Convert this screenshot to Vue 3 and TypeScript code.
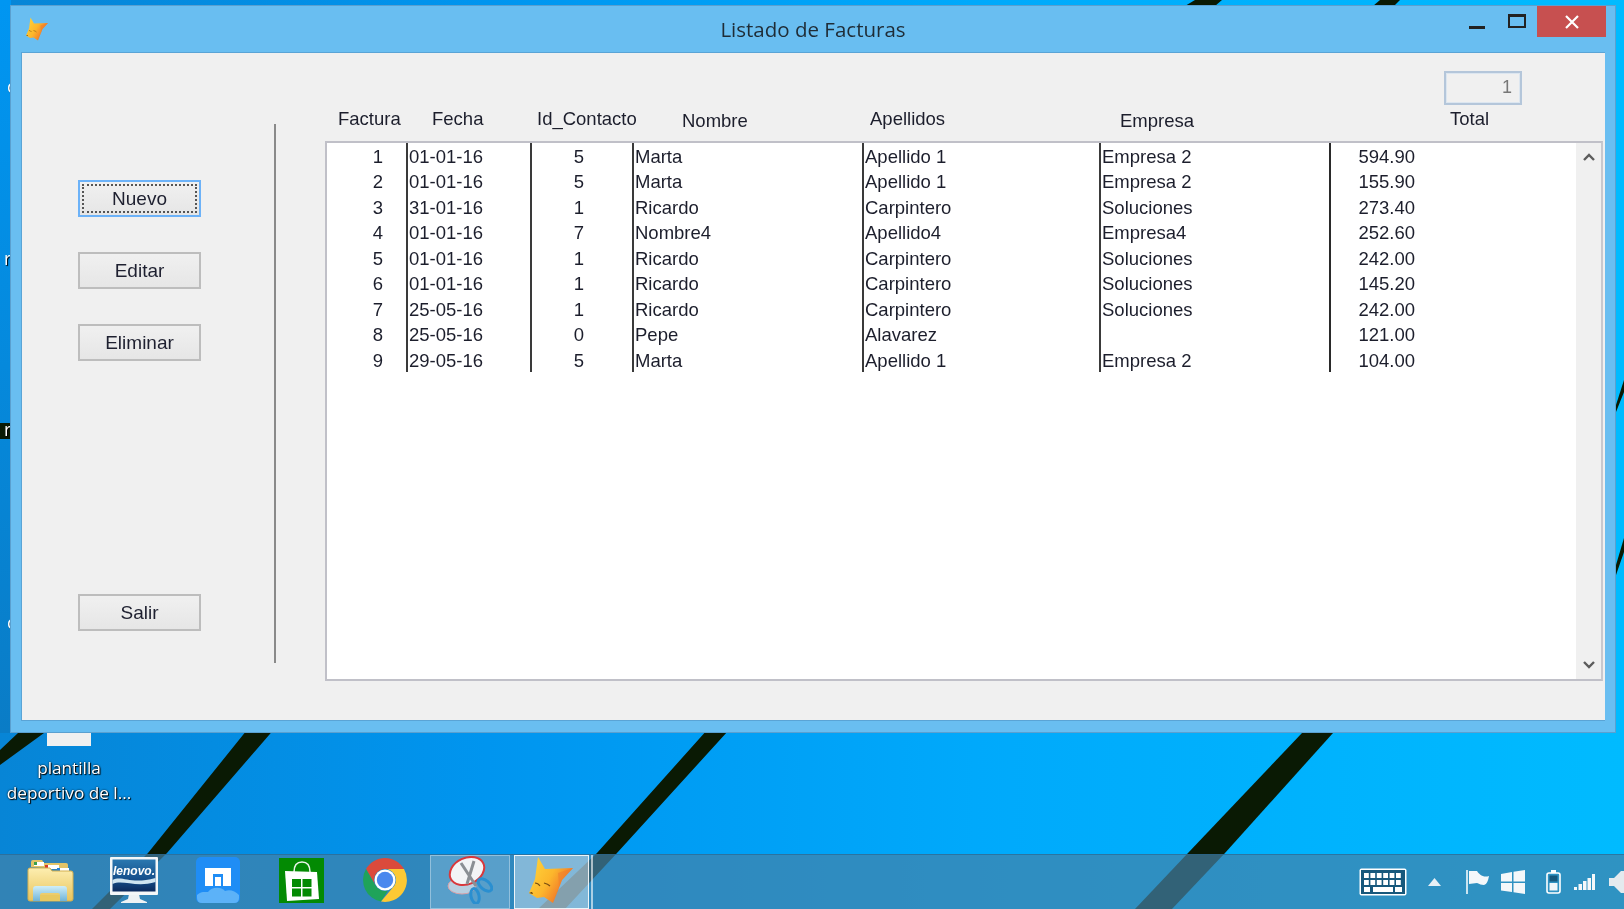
<script setup lang="ts">
interface Factura {
  id: number
  fecha: string
  contacto: number
  nombre: string
  apellidos: string
  empresa: string
  total: string
}

const facturas: Factura[] = [
  { id: 1, fecha: '01-01-16', contacto: 5, nombre: 'Marta', apellidos: 'Apellido 1', empresa: 'Empresa 2', total: '594.90' },
  { id: 2, fecha: '01-01-16', contacto: 5, nombre: 'Marta', apellidos: 'Apellido 1', empresa: 'Empresa 2', total: '155.90' },
  { id: 3, fecha: '31-01-16', contacto: 1, nombre: 'Ricardo', apellidos: 'Carpintero', empresa: 'Soluciones', total: '273.40' },
  { id: 4, fecha: '01-01-16', contacto: 7, nombre: 'Nombre4', apellidos: 'Apellido4', empresa: 'Empresa4', total: '252.60' },
  { id: 5, fecha: '01-01-16', contacto: 1, nombre: 'Ricardo', apellidos: 'Carpintero', empresa: 'Soluciones', total: '242.00' },
  { id: 6, fecha: '01-01-16', contacto: 1, nombre: 'Ricardo', apellidos: 'Carpintero', empresa: 'Soluciones', total: '145.20' },
  { id: 7, fecha: '25-05-16', contacto: 1, nombre: 'Ricardo', apellidos: 'Carpintero', empresa: 'Soluciones', total: '242.00' },
  { id: 8, fecha: '25-05-16', contacto: 0, nombre: 'Pepe', apellidos: 'Alavarez', empresa: '', total: '121.00' },
  { id: 9, fecha: '29-05-16', contacto: 5, nombre: 'Marta', apellidos: 'Apellido 1', empresa: 'Empresa 2', total: '104.00' },
]

const cabeceras = ['Factura', 'Fecha', 'Id_Contacto', 'Nombre', 'Apellidos', 'Empresa', 'Total']

// wallpaper stripes, in screen pixels
const franjas = [
  '255,720 282,720 167,853 110,909 92,909 148,853',
  '716,720 738,720 617,853 565,909 538,909 597,853',
  '1302,733 1333,733 1225,853 1172,909 1135,909 1188,853',
  '18,733 44,733 0,765 0,750',
  '1195,0 1222,0 1215,6 1185,6',
  '1380,0 1400,0 1394,6 1373,6',
  '1616,405 1624,380 1624,392 1616,412',
  '1616,565 1624,538 1624,552 1616,575',
  '0,423 12,423 12,439 0,439',
]

const teclas = [0, 1, 2, 3, 4, 5]
</script>

<template>
  <div class="desktop">
    <svg class="wallpaper" viewBox="0 0 1624 909">
      <polygon v-for="p in franjas" :key="p" :points="p" fill="#0a1a04" />
    </svg>

    <span class="edge edge--1">c</span>
    <span class="edge edge--2">r</span>
    <span class="edge edge--3">r</span>
    <span class="edge edge--4">c</span>

    <div class="file-icon">
      <div class="file-icon__sheet" />
      <div class="file-icon__label">plantilla<br />deportivo de l...</div>
    </div>

    <div class="window">
      <header class="titlebar">
        <svg class="titlebar__icon" viewBox="0 0 46 48"><use href="#fox" /></svg>
        <h1 class="titlebar__title">Listado de Facturas</h1>
        <div class="titlebar__controls">
          <span class="ctl-min" />
          <span class="ctl-max" />
          <span class="ctl-close">
            <svg viewBox="0 0 14 14" width="14" height="14">
              <path d="M1 1 13 13M13 1 1 13" stroke="#fff" stroke-width="2.2" fill="none" />
            </svg>
          </span>
        </div>
      </header>

      <div class="client">
        <aside class="sidebar">
          <button class="btn btn--focus"><span>Nuevo</span></button>
          <button class="btn">Editar</button>
          <button class="btn">Eliminar</button>
          <button class="btn btn--salir">Salir</button>
        </aside>
        <div class="divider" />
        <main class="main">
          <div class="counter">1</div>
          <div class="heads">
            <span v-for="c in cabeceras" :key="c" :class="{ low: c === 'Nombre' || c === 'Empresa' }">{{ c }}</span>
          </div>
          <div class="list">
            <div class="rows">
              <div v-for="f in facturas" :key="f.id" class="row">
                <span class="num">{{ f.id }}</span>
                <span class="cell">{{ f.fecha }}</span>
                <span class="cell cell--id">{{ f.contacto }}</span>
                <span class="cell">{{ f.nombre }}</span>
                <span class="cell">{{ f.apellidos }}</span>
                <span class="cell">{{ f.empresa }}</span>
                <span class="cell cell--total">{{ f.total }}</span>
              </div>
            </div>
            <div class="scrollbar">
              <svg viewBox="0 0 12 8" width="12" height="8"><path d="M1 7 6 2l5 5" stroke="#5c5c5c" stroke-width="2.4" fill="none" /></svg>
              <svg viewBox="0 0 12 8" width="12" height="8"><path d="M1 1l5 5 5-5" stroke="#5c5c5c" stroke-width="2.4" fill="none" /></svg>
            </div>
          </div>
        </main>
      </div>
    </div>

    <footer class="taskbar">
      <div class="task task--first">
        <svg viewBox="0 0 47 43" width="47" height="43">
          <defs>
            <linearGradient id="fold" x1="0" y1="0" x2="0" y2="1"><stop offset="0" stop-color="#fdeeb0" /><stop offset="1" stop-color="#e8c45c" /></linearGradient>
            <linearGradient id="glass" x1="0" y1="0" x2="0" y2="1"><stop offset="0" stop-color="#cfeef8" /><stop offset="1" stop-color="#6fb4d8" /></linearGradient>
          </defs>
          <path d="M4 8V3q0-2 2-2h9l2 3h22q2 0 2 2v4z" fill="#e2c468" />
          <rect x="7" y="3" width="10" height="4" fill="#fff" /><rect x="7" y="3" width="3" height="3" fill="#3aa04a" />
          <rect x="18" y="6" width="14" height="4" fill="#fff" /><rect x="18" y="6" width="3" height="3" fill="#d8382a" />
          <rect x="30" y="9" width="12" height="4" fill="#fff" /><rect x="30" y="9" width="3" height="3" fill="#2a80d0" />
          <path d="M1 11q0-2 2-2h20l2 3h19q2 0 2 2v26q0 2-2 2H3q-2 0-2-2z" fill="url(#fold)" stroke="#d4b050" />
          <path d="M6 42V30q0-3 3-3h28q3 0 3 3v12h-7v-6q0-2-2-2H15q-2 0-2 2v6z" fill="url(#glass)" />
          <rect x="13" y="36" width="20" height="6" fill="#e8c860" />
        </svg>
      </div>
      <div class="task">
        <svg viewBox="0 0 48 46" width="48" height="46">
          <defs>
            <linearGradient id="scr" x1="0" y1="0" x2="0" y2="1"><stop offset="0" stop-color="#2a78b0" /><stop offset=".6" stop-color="#16508c" /><stop offset="1" stop-color="#0c2a5c" /></linearGradient>
          </defs>
          <path d="M19 37h10l1 5 7 3v1H11v-1l7-3z" fill="#eef2f4" />
          <rect x="0" y="0" width="48" height="38" rx="1" fill="#f4f7f8" />
          <rect x="2.500" y="2.500" width="43" height="32" fill="url(#scr)" />
          <path d="M2.500 23c10-5 18 5 43-2v4c-20 6-33-3-43 2z" fill="#cfe4f0" />
          <text x="24" y="18" class="lenovo" text-anchor="middle">lenovo.</text>
        </svg>
      </div>
      <div class="task">
        <svg viewBox="0 0 44 46" width="44" height="46">
          <rect width="44" height="46" rx="5" fill="#1f8df5" />
          <path d="M9 11h26v18h-8V17H17v12H9z" fill="#fff" />
          <rect x="19" y="20" width="6" height="9" fill="#fff" />
          <path d="M1 38c4-4 8-3 11-3 3-5 13-6 17-1 5-2 10 0 14 4v3q0 5-5 5H6q-5 0-5-5z" fill="#5cb2f8" />
        </svg>
      </div>
      <div class="task">
        <svg viewBox="0 0 45 45" width="45" height="45">
          <rect width="45" height="45" fill="#038a03" />
          <path d="M15 14q0-10 8-10t8 10" fill="none" stroke="#e8f4e8" stroke-width="1.500" />
          <path d="M6 13l32 1 2 27-32 2z" fill="#fff" />
          <path d="M13 21h9v8h-9zM23.500 21h9v8h-9zM13 30.500h9v8h-9zM23.500 30.500h9v8h-9z" fill="#038a03" />
        </svg>
      </div>
      <div class="task">
        <svg viewBox="0 0 44 44" width="44" height="44">
          <path d="M3 11A22 22 0 0 1 41 11H22A11 11 0 0 0 12.500 27.500z" fill="#db4a3c" />
          <path d="M3 11 12.500 27.500A11 11 0 0 0 25 32.600L18 43.600A22 22 0 0 1 3 11z" fill="#1fa35a" />
          <path d="M41 11H22A11 11 0 0 1 31.500 27.500L18 43.600A22 22 0 0 0 41 11z" fill="#fcc934" />
          <circle cx="22" cy="22" r="10.500" fill="#fff" />
          <circle cx="22" cy="22" r="8.200" fill="#4a88ee" />
        </svg>
      </div>
      <div class="task task--snip">
        <svg viewBox="0 0 46 48" width="46" height="48">
          <ellipse cx="15" cy="30" rx="14" ry="8" fill="#b8cfe0" stroke="#d8a0a8" />
          <ellipse cx="20" cy="15" rx="18" ry="13" transform="rotate(-25 20 15)" fill="#f2f4f6" stroke="#d8383c" stroke-width="2" />
          <path d="M14 7 29 30M27 5 20 28" stroke="#8a8f94" stroke-width="3" fill="none" />
          <ellipse cx="38" cy="29" rx="4.500" ry="8" transform="rotate(-50 38 29)" fill="none" stroke="#2a8fd0" stroke-width="3" />
          <ellipse cx="28" cy="40" rx="4" ry="7.500" transform="rotate(-12 28 40)" fill="none" stroke="#2a8fd0" stroke-width="3" />
        </svg>
      </div>
      <div class="task task--active">
        <svg viewBox="0 0 46 48" width="46" height="48"><use href="#fox" /></svg>
      </div>
      <div class="task-edge" />

      <div class="tray">
        <svg class="tray__kb" viewBox="0 0 48 28" width="48" height="28">
          <rect x=".5" y=".5" width="47" height="27" rx="2" fill="#fff" />
          <rect x="2" y="2" width="44" height="24" fill="#17587c" />
          <g fill="#fff">
            <template v-for="i in teclas" :key="i">
              <rect :x="5 + i * 6.400" y="5" width="4.800" height="5" />
              <rect :x="5 + i * 6.400" y="12" width="4.800" height="5" />
            </template>
            <rect x="5" y="19" width="6" height="5" />
            <rect x="14" y="19" width="20" height="5" />
            <rect x="36" y="19" width="7" height="5" />
          </g>
        </svg>
        <svg class="tray__arrow" viewBox="0 0 13 8" width="13" height="8"><path d="M6.500 0 13 8H0z" fill="#e8f0f6" /></svg>
        <svg class="tray__flag" viewBox="0 0 23 24" width="23" height="24">
          <path d="M1 0v24" stroke="#fff" stroke-width="1.500" />
          <path d="M3 1h8c2 3 6 7 12 5-1 5-2 8-5 9-3 0-4-1-7-2l-8 1z" fill="#f4f8fa" />
        </svg>
        <svg class="tray__win" viewBox="0 0 24 24" width="24" height="24">
          <path d="M0 4l11-2v9.500H0zM12.500 1.800 24 0v11.500H12.500zM0 13h11v9L0 20.500zM12.500 13H24v11l-11.500-1.800z" fill="#f4f8fa" />
        </svg>
        <svg class="tray__bat" viewBox="0 0 15 24" width="15" height="24">
          <rect x="1" y="3" width="13" height="20" rx="2" fill="none" stroke="#fff" stroke-width="1.600" />
          <rect x="5" y="0" width="5" height="3" fill="#fff" />
          <rect x="3.500" y="13" width="8" height="7.500" fill="#f0f6fa" />
          <rect x="3.500" y="5.500" width="8" height="6" fill="#17587c" />
        </svg>
        <svg class="tray__net" viewBox="0 0 21 16" width="21" height="16">
          <path d="M0 13h3v3H0zM4.500 10h3.500v6H4.500zM9 7h3.500v9H9zM13.500 4H17v12h-3.500zM18 0h3v16h-3z" fill="#f4f8fa" />
        </svg>
        <svg class="tray__vol" viewBox="0 0 15 22" width="15" height="22">
          <path d="M0 7h5l7-7h3v22h-3l-7-7H0z" fill="#e4eaee" />
        </svg>
      </div>
    </footer>

    <svg class="defs" width="0" height="0">
      <defs>
        <linearGradient id="foxfill" x1="0" y1="0" x2="1" y2=".6">
          <stop offset="0" stop-color="#ffd83c" />
          <stop offset=".55" stop-color="#fcb62c" />
          <stop offset="1" stop-color="#ee6428" />
        </linearGradient>
        <symbol id="fox" viewBox="0 0 46 48">
          <path d="M10 1 17 13 45 12 34 24 25 47 16 41 9 42 1 37 7 23z" fill="url(#foxfill)" />
          <path d="M25 47 34 24 45 12 30 17 31 30z" fill="#ef7a2c" opacity=".5" />
          <path d="M7 27q3 0 5 3M16 27q4 1 6 3" stroke="#7a4e10" stroke-width="1.100" fill="none" />
          <path d="M1 37l3-1 1 2z" fill="#5a3408" />
        </symbol>
      </defs>
    </svg>
  </div>
</template>

<style scoped>
.desktop {
  position: relative;
  width: 1624px;
  height: 909px;
  overflow: hidden;
  background:
    linear-gradient(180deg, #0096f2 0%, #0a7cc6 100%) 0 0 / 11px 733px no-repeat,
    linear-gradient(90deg, #0785d6 0%, #0095ef 30%, #00a9fb 60%, #00bbff 100%);
  font-family: "Liberation Sans", Arial, sans-serif;
  filter: blur(0.35px);
}

.wallpaper {
  position: absolute;
  inset: 0;
  width: 1624px;
  height: 909px;
}

.defs {
  position: absolute;
}

.edge {
  position: absolute;
  color: #fff;
  font: 18px/20px "Open Sans", sans-serif;
  text-shadow: 1px 1px 1px #000;
}
.edge--1 { left: 7px; top: 76px; }
.edge--2 { left: 4px; top: 248px; }
.edge--3 { left: 4px; top: 419px; }
.edge--4 { left: 7px; top: 612px; }

.file-icon {
  position: absolute;
  left: 0;
  top: 730px;
  width: 138px;
  text-align: center;
}
.file-icon__sheet {
  width: 44px;
  height: 16px;
  margin-left: 47px;
  background: #f0f0f0;
}
.file-icon__label {
  margin-top: 9px;
  color: #fff;
  font: 17.200px/25px "Open Sans", sans-serif;
  text-shadow: 1px 1px 1px #000, 0 0 2px #000;
}

.window {
  position: absolute;
  left: 10px;
  top: 5px;
  width: 1606px;
  height: 728px;
  display: flex;
  flex-direction: column;
  box-sizing: border-box;
  background: #69bef1;
  border: 1px solid #5aa0d0;
  padding: 0 10px 11px 10px;
}

.titlebar {
  position: relative;
  flex: none;
  height: 46px;
  display: flex;
  align-items: center;
  justify-content: center;
}
.titlebar__icon {
  position: absolute;
  left: 4px;
  top: 11px;
  width: 24px;
  height: 24px;
}
.titlebar__title {
  margin: 0;
  font: 400 20.500px/24px "Open Sans", sans-serif;
  color: #1f2c36;
}
.titlebar__controls {
  position: absolute;
  right: -1px;
  top: 0;
  display: flex;
  align-items: flex-start;
}
.ctl-min {
  width: 16px;
  height: 3px;
  margin: 20px 23px 0 0;
  background: #222;
}
.ctl-max {
  width: 18px;
  height: 14px;
  box-sizing: border-box;
  margin: 8px 11px 0 0;
  border: 2px solid #222;
  border-top-width: 3px;
}
.ctl-close {
  width: 69px;
  height: 31px;
  display: flex;
  align-items: center;
  justify-content: center;
  background: #c75050;
}

.client {
  flex: 1;
  display: flex;
  min-height: 0;
  background: #f0f0f0;
  border: 1px solid #5aa4d6;
  border-width: 1px 0 1px 1px;
}

.sidebar {
  flex: none;
  width: 123px;
  margin-left: 56px;
  padding: 127px 0 89px;
  display: flex;
  flex-direction: column;
  gap: 35px;
}
.btn {
  height: 37px;
  padding: 0;
  display: flex;
  align-items: center;
  justify-content: center;
  font: 19px "Liberation Sans", Arial, sans-serif;
  color: #1e2030;
  border: 2px solid #bdbdbd;
  background: linear-gradient(#f0f0f0, #e6e6e6);
}
.btn--focus {
  border-color: #6cb2f8;
  padding: 2px;
}
.btn--focus span {
  flex: 1;
  align-self: stretch;
  display: flex;
  align-items: center;
  justify-content: center;
  border: 2px dotted #555;
}
.btn--salir {
  margin-top: auto;
}

.divider {
  flex: none;
  width: 2px;
  margin: 71px 0 57px 73px;
  background: #8a8a8a;
}

.main {
  flex: 1;
  min-width: 0;
  margin-left: 49px;
  margin-right: 2px;
  display: flex;
  flex-direction: column;
}

.counter {
  align-self: flex-end;
  width: 78px;
  height: 34px;
  margin: 18px 81px 0 0;
  padding-right: 8px;
  box-sizing: border-box;
  border: 2px solid #b4c6da;
  box-shadow: inset 0 0 0 1px #dce6f0;
  font-size: 18px;
  line-height: 29px;
  text-align: right;
  color: #777;
}

.heads {
  display: grid;
  grid-template-columns: 94px 105px 145px 188px 250px 330px auto;
  height: 22px;
  margin-top: 3px;
  padding-left: 13px;
  font-size: 18.500px;
  line-height: 22px;
  color: #1c1e2c;
}
.heads .low {
  transform: translateY(1.500px);
}

.list {
  flex: 1;
  display: flex;
  min-height: 0;
  margin: 11px 0 39px;
  border: 2px solid #c0c0c8;
  border-right-color: #c8c8ce;
  background: #fff;
}
.rows {
  flex: 1;
  min-width: 0;
}
.row {
  display: grid;
  grid-template-columns: 79px 124px 102px 230px 237px 230px 1fr;
  height: 25.460px;
  font-size: 18.500px;
  line-height: 21.460px;
  color: #1c1e2c;
}
.row span {
  padding-top: 3px;
  box-sizing: border-box;
}
.num {
  padding-right: 23px;
  text-align: right;
}
.cell {
  padding-left: 1px;
  border-left: 2px solid #3a3a3a;
}
.row .cell--id {
  padding: 3px 48px 0 0;
  text-align: right;
}
.row .cell--total {
  border-left-color: #2a2a2a;
  padding: 3px 161px 0 0;
  text-align: right;
}
.scrollbar {
  flex: none;
  width: 25px;
  padding: 10px 0;
  box-sizing: border-box;
  display: flex;
  flex-direction: column;
  justify-content: space-between;
  align-items: center;
  background: #f0f0f0;
}

.taskbar {
  position: absolute;
  left: 0;
  right: 0;
  bottom: 0;
  height: 55px;
  box-sizing: border-box;
  display: flex;
  align-items: center;
  background: rgba(67, 129, 168, 0.7);
  border-top: 1px solid rgba(40, 100, 140, 0.6);
}
.task {
  flex: none;
  width: 83.700px;
  height: 100%;
  padding-bottom: 4px;
  display: flex;
  align-items: center;
  justify-content: center;
  box-sizing: border-box;
}
.task--first {
  margin-left: 8.500px;
}
.task--snip {
  width: 80px;
  margin-left: 3px;
  background: rgba(255, 255, 255, 0.2);
  border: 1px solid rgba(255, 255, 255, 0.35);
}
.task--active {
  width: 75px;
  margin-left: 4px;
  background: rgba(255, 255, 255, 0.4);
  border: 1px solid rgba(255, 255, 255, 0.85);
}
.task-edge {
  flex: none;
  width: 2px;
  height: 100%;
  margin-left: 2px;
  background: rgba(255, 255, 255, 0.6);
}

.lenovo {
  font: italic 700 12px "Liberation Sans", Arial, sans-serif;
  fill: #fff;
}

.tray {
  margin-left: auto;
  display: flex;
  align-items: center;
}
.tray__arrow { margin-left: 21px; }
.tray__flag { margin-left: 25px; }
.tray__win { margin-left: 12px; }
.tray__bat { margin-left: 21px; }
.tray__net { margin-left: 13px; }
.tray__vol { margin-left: 14px; }
</style>

<style>
html,
body {
  margin: 0;
}
</style>
